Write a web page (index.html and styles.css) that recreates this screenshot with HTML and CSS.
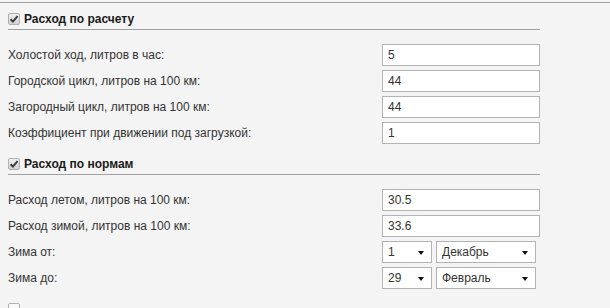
FILE: index.html
```html
<!DOCTYPE html>
<html>
<head>
<meta charset="utf-8">
<link rel="stylesheet" href="styles.css">
</head>
<body>
<div class="page">
  <div class="section">
    <div class="head">
      <span class="cb"><svg width="10" height="10" viewBox="0 0 10 10"><path d="M1.6 5.2 L3.9 7.6 L8.6 2.2" fill="none" stroke="#3c3c3c" stroke-width="2"/></svg></span>
      <span class="title">Расход по расчету</span>
    </div>
    <div class="rows">
      <div class="row"><span class="label">Холостой ход, литров в час:</span><span class="input">5</span></div>
      <div class="row"><span class="label">Городской цикл, литров на 100 км:</span><span class="input">44</span></div>
      <div class="row"><span class="label">Загородный цикл, литров на 100 км:</span><span class="input">44</span></div>
      <div class="row"><span class="label">Коэффициент при движении под загрузкой:</span><span class="input">1</span></div>
    </div>
  </div>
  <div class="section">
    <div class="head">
      <span class="cb"><svg width="10" height="10" viewBox="0 0 10 10"><path d="M1.6 5.2 L3.9 7.6 L8.6 2.2" fill="none" stroke="#3c3c3c" stroke-width="2"/></svg></span>
      <span class="title">Расход по нормам</span>
    </div>
    <div class="rows">
      <div class="row"><span class="label">Расход летом, литров на 100 км:</span><span class="input">30.5</span></div>
      <div class="row"><span class="label">Расход зимой, литров на 100 км:</span><span class="input">33.6</span></div>
      <div class="row"><span class="label">Зима от:</span><span class="selects"><span class="select small">1<i class="arrow"></i></span><span class="select big">Декабрь<i class="arrow"></i></span></span></div>
      <div class="row"><span class="label">Зима до:</span><span class="selects"><span class="select small">29<i class="arrow"></i></span><span class="select big">Февраль<i class="arrow"></i></span></span></div>
    </div>
  </div>
  <div class="section">
    <div class="head">
      <span class="cb empty"></span>
    </div>
  </div>
</div>
</body>
</html>
```
FILE: styles.css
```css
html, body {
  margin: 0;
  padding: 0;
  background: #f4f4f4;
  height: 100%;
  overflow: hidden;
}
body {
  font-family: "Liberation Sans", Arial, sans-serif;
  font-size: 12px;
  color: #333;
}
.page {
  margin-top: 2px;
  border-top: 1px solid #a3a3a3;
}
.section {
  width: 532px;
  margin-left: 8px;
}
.head {
  height: 27px;
  box-sizing: border-box;
  border-bottom: 1px solid #a0a0a0;
  display: flex;
  align-items: flex-start;
  padding-top: 10px;
}
.cb {
  width: 10px;
  height: 10px;
  border: 1px solid #b0b0b0;
  border-radius: 2px;
  background: linear-gradient(#efefef, #d2d2d2);
  display: flex;
  align-items: center;
  justify-content: center;
  margin-right: 4px;
  flex: none;
}
.cb svg { display: block; }
.cb.empty { background: #fafafa; }
.title {
  font-weight: bold;
  font-size: 12px;
  color: #1a1a1a;
  line-height: 13px;
}
.rows {
  padding-top: 14px;
}
.row {
  display: flex;
  align-items: center;
  height: 22px;
  margin-bottom: 4px;
}
.label {
  width: 374px;
}
.input {
  width: 158px;
  height: 22px;
  box-sizing: border-box;
  border: 1px solid #b3b3b3;
  background: #fff;
  padding-left: 5px;
  line-height: 20px;
}
.selects {
  display: flex;
  gap: 4px;
}
.select {
  height: 22px;
  box-sizing: border-box;
  border: 1px solid #b3b3b3;
  background: #fff;
  padding-left: 5px;
  line-height: 20px;
  position: relative;
}
.select.small { width: 50px; }
.select.big { width: 100px; }
.arrow {
  position: absolute;
  right: 7px;
  top: 9px;
  width: 0;
  height: 0;
  border-left: 3.5px solid transparent;
  border-right: 3.5px solid transparent;
  border-top: 4px solid #111;
}
```
